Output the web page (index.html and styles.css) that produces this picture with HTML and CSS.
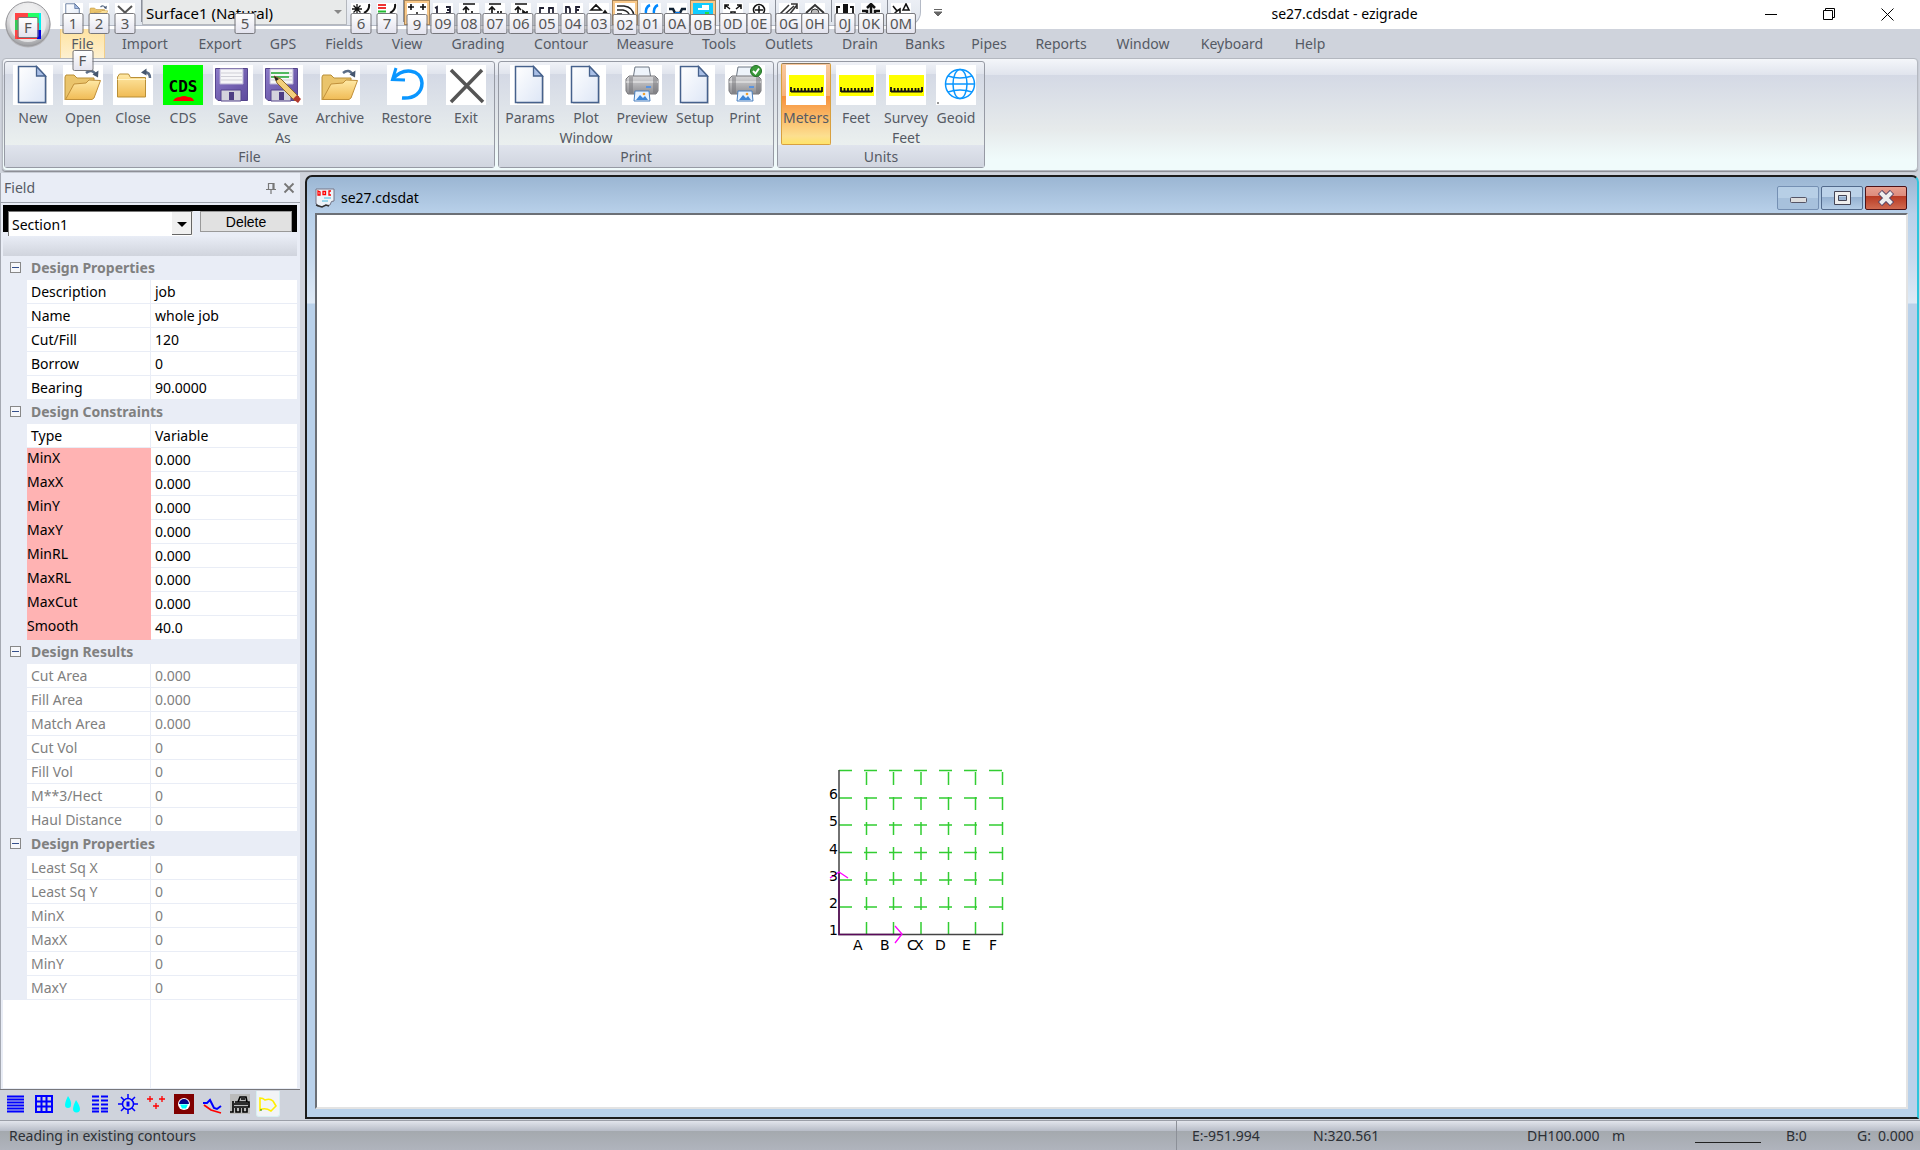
FILE: index.html
```html
<!DOCTYPE html>
<html lang="en">
<head>
<meta charset="utf-8">
<title>se27.cdsdat - ezigrade</title>
<link rel="stylesheet" href="styles.css">
</head>
<body>
<svg class="defs" aria-hidden="true">
  <defs>
    <linearGradient id="gPage" x1="0" y1="0" x2="1" y2="1"><stop offset="0" stop-color="#fff"/><stop offset="1" stop-color="#dde6f6"/></linearGradient>
    <linearGradient id="gFold" x1="0" y1="0" x2="0" y2="1"><stop offset="0" stop-color="#ffe9a6"/><stop offset="1" stop-color="#f0bb55"/></linearGradient>
    <linearGradient id="gPrn" x1="0" y1="0" x2="0" y2="1"><stop offset="0" stop-color="#d8d8da"/><stop offset="1" stop-color="#8c8c90"/></linearGradient>
    <linearGradient id="gDisk" x1="0" y1="0" x2="1" y2="1"><stop offset="0" stop-color="#8c7cc8"/><stop offset="1" stop-color="#5e4a9e"/></linearGradient>
    <radialGradient id="gOrb" cx=".5" cy=".3" r=".75"><stop offset="0" stop-color="#fff"/><stop offset=".6" stop-color="#dcdcde"/><stop offset="1" stop-color="#8f9094"/></radialGradient>
    <symbol id="page" viewBox="0 0 40 40">
      <path d="M7 3h19l8 9v27H7z" fill="#999" opacity=".35"/>
      <path d="M5.500 1.500h18l9 9.500v26.500h-27z" fill="url(#gPage)" stroke="#46618c" stroke-width="1.500"/>
      <path d="M23.500 1.500v9.500h9z" fill="#a9bfe6" stroke="#46618c" stroke-width="1.300"/>
    </symbol>
    <symbol id="folder" viewBox="0 0 40 40">
      <path d="M2 35V12l1-2h8l3 3h17v6" fill="#eac46c" stroke="#b98f36"/>
      <path d="M2.500 34.500L11 19l12-1 3-3 11.500.5L31 33l-2 1.500z" fill="url(#gFold)" stroke="#c1903a"/>
      <path d="M23 8q6-5 10 2" fill="none" stroke="#5a6c86" stroke-width="2.500"/><path d="M29.500 9.500l5.500 3 .5-7z" fill="#45566f"/>
    </symbol>
    <symbol id="folderclosed" viewBox="0 0 40 40">
      <path d="M4.500 32V12l2-3h9l2 3.500h15V32z" fill="url(#gFold)" stroke="#b98f36"/>
      <path d="M4.500 14.500h28" stroke="#fff3c6"/>
      <path d="M31 7q6 0 6 6" fill="none" stroke="#5a6c86" stroke-width="2.500"/><path d="M28 7.500l5.500-4v7z" fill="#45566f"/>
    </symbol>
    <symbol id="disk" viewBox="0 0 40 40">
      <path d="M2.500 3.500h32v32H5l-2.500-2.500z" fill="url(#gDisk)" stroke="#54448c"/>
      <path d="M7 4h23v15H7z" fill="#f6f6f8" stroke="#b9b3d4"/><path d="M8 8h21M8 11.500h21M8 15h21" stroke="#cfcfd6"/>
      <path d="M8 25h20v11H8z" fill="#d4d4dc" stroke="#54448c"/><path d="M16 27h5v8h-5z" fill="#4e3f84"/>
    </symbol>
    <symbol id="printer" viewBox="0 0 40 40">
      <path d="M13 2h14l2 12H11z" fill="#eef4fb" stroke="#6d7784"/>
      <path d="M4 14l3-3h26l3 3v12l-2 3H6l-2-3z" fill="url(#gPrn)" stroke="#77777b"/>
      <path d="M4 17h32" stroke="#efefef"/><path d="M7 12h4v16H7zM31 12h4v16h-4z" fill="#6f6f74" opacity=".45"/>
      <path d="M24 22h5" stroke="#3f8df0" stroke-width="1.500"/><path d="M13 26h14l1 10H12z" fill="#e6f2ff" stroke="#4a7fbd"/>
      <path d="M14 35l4-5 3 3 2-2 3 4z" fill="#3d86d8"/><circle cx="22" cy="29" r="1.300" fill="#f0a030"/>
    </symbol>
    <symbol id="ruler" viewBox="0 0 40 40">
      <path d="M3 10h35v21H3z" fill="#ff0"/>
      <path d="M5 26.500h31M5 22v5M36 22v5M8.500 23v3M12 23v3M15.500 23v3M19 23v3M22.500 23v3M26 23v3M29.500 23v3M32.500 23v3" stroke="#111" stroke-width="1.800"/>
    </symbol>
  </defs>
</svg>

<header class="titlebar">
  <button class="orb" aria-label="Application menu">
    <svg width="48" height="48" viewBox="0 0 48 48"><circle cx="24" cy="25" r="22.500" fill="#b4b4b8"/><circle cx="24" cy="24" r="22" fill="url(#gOrb)" stroke="#98989c"/><circle cx="24" cy="24" r="18" fill="#ececee" opacity=".8"/>
      <path d="M11 13h26v26H11z" fill="#f44"/><path d="M24 13h11v10H24z" fill="#2f6"/><path d="M11 20h4v10h-4z" fill="#3c5"/><path d="M35 13h2v17h-2z" fill="#0ee"/><path d="M33 30h4v9h-4z" fill="#00d"/><path d="M13 37h20v2H13z" fill="#f33"/></svg>
    <kbd class="tip">F</kbd>
  </button>
  <div class="qat">
    <button class="q" aria-label="New"><svg width="20" height="20"><use href="#page"/></svg><kbd class="tip">1</kbd></button>
    <button class="q" aria-label="Open"><svg width="20" height="20"><use href="#folder"/></svg><kbd class="tip">2</kbd></button>
    <button class="q" aria-label="Close"><svg width="20" height="20"><path d="M3 3l14 13M17 3L3 16" stroke="#555" stroke-width="2"/></svg><kbd class="tip">3</kbd></button>
    <i class="sep"></i>
    <div class="surface"><select aria-label="Surface"><option>Surface1 (Natural)</option></select><kbd class="tip">5</kbd></div>
    <button class="q" aria-label="Points"><svg width="20" height="20"><path d="M6 1v10M1 6h10M2.500 2.500l7 7M9.500 2.500l-7 7" stroke="#111" stroke-width="1.300"/><path d="M18 1q1 6-5 9" fill="none" stroke="#111" stroke-width="2"/></svg><kbd class="tip">6</kbd></button>
    <button class="q" aria-label="Layers"><svg width="20" height="20"><path d="M1 2h8M1 5h8" stroke="#e33" stroke-width="2"/><path d="M1 8.500h8M1 11h8" stroke="#2b3" stroke-width="2"/><path d="M18 1q1 6-5 9" fill="none" stroke="#111" stroke-width="2"/></svg><kbd class="tip">7</kbd></button>
    <i class="sep"></i>
    <button class="q on" aria-label="Grid points"><svg width="20" height="20"><path d="M1 4h6M4 1v6M13 4h6M16 1v6M9 10h2" stroke="#111" stroke-width="1.600"/></svg><kbd class="tip">9</kbd></button>
    <button class="q" aria-label="Numbers"><svg width="20" height="20"><path d="M2 5l2-1v7M13 4h4v3h-3M17 7v3h-4" fill="none" stroke="#223" stroke-width="1.800"/></svg><kbd class="tip">09</kbd></button>
    <button class="q" aria-label="Level L"><svg width="20" height="20"><path d="M4 1h12M7 12V4M4 7l3-3 3 3M13 8v4" fill="none" stroke="#111" stroke-width="1.700"/></svg><kbd class="tip">08</kbd></button>
    <button class="q" aria-label="Level H"><svg width="20" height="20"><path d="M4 1h12M7 12V4M4 7l3-3 3 3M13 8v4M16 8v4" fill="none" stroke="#111" stroke-width="1.700"/></svg><kbd class="tip">07</kbd></button>
    <button class="q" aria-label="Level N"><svg width="20" height="20"><path d="M4 1h12M7 12V4M4 7l3-3 3 3M12 12V8l4 3V8" fill="none" stroke="#111" stroke-width="1.700"/></svg><kbd class="tip">06</kbd></button>
    <button class="q" aria-label="Codes"><svg width="20" height="20"><path d="M7 5H3v6h4M12 5h4v6h-4z" fill="none" stroke="#223" stroke-width="1.800"/></svg><kbd class="tip">05</kbd></button>
    <button class="q" aria-label="Descriptions"><svg width="20" height="20"><path d="M3 4h3l1 2v5H3zM17 4h-4v7h4M13 7h3" fill="none" stroke="#223" stroke-width="1.800"/></svg><kbd class="tip">04</kbd></button>
    <button class="q" aria-label="Triangles"><svg width="20" height="20"><path d="M2 7l5-5 5 5zM13 12l3-4 3 4z" fill="none" stroke="#111" stroke-width="1.700"/></svg><kbd class="tip">03</kbd></button>
    <button class="q on" aria-label="Contours"><svg width="20" height="20"><path d="M2 3h7q9 1 10 10M2 7h6q6 1 7 7M2 11h5" fill="none" stroke="#222" stroke-width="1.500"/></svg><kbd class="tip">02</kbd></button>
    <button class="q" aria-label="Flow"><svg width="20" height="20"><path d="M9 2q-5 2-4 10M17 2q-5 2-4 10" fill="none" stroke="#08f" stroke-width="2.500"/></svg><kbd class="tip">01</kbd></button>
    <button class="q" aria-label="Channel"><svg width="20" height="20"><path d="M2 6h4l2 4h5l2-4h4" fill="none" stroke="#123" stroke-width="2.500"/><path d="M8 9h5v4H8z" fill="#07e"/></svg><kbd class="tip">0A</kbd></button>
    <button class="q on" aria-label="Map"><svg width="20" height="20"><path d="M0 0h20v16H0z" fill="#1cf"/><path d="M5 5h4V2h7v5H5z" fill="#fff"/><path d="M12 9h4v4h-4z" fill="#2d4"/></svg><kbd class="tip">0B</kbd></button>
    <i class="sep"></i>
    <button class="q" aria-label="Zoom extents"><svg width="20" height="20"><path d="M2 6V2h4M2 2l5 4M18 6V2h-4M18 2l-5 4M8 12V9h4v3" fill="none" stroke="#111" stroke-width="1.600"/></svg><kbd class="tip">0D</kbd></button>
    <button class="q" aria-label="Zoom in"><svg width="20" height="20"><circle cx="10" cy="7" r="5.500" fill="none" stroke="#111" stroke-width="1.600"/><path d="M6 7h8M10 3v8" stroke="#111" stroke-width="1.500"/></svg><kbd class="tip">0E</kbd></button>
    <i class="sep"></i>
    <button class="q" aria-label="Slope"><svg width="20" height="20"><path d="M1 11L10 2M5 12l10-9M10 12l8-10M12 1h6v5" fill="none" stroke="#333" stroke-width="1.600"/></svg><kbd class="tip">0G</kbd></button>
    <button class="q" aria-label="Level"><svg width="20" height="20"><path d="M1 10l9-8 9 8" fill="none" stroke="#333" stroke-width="2"/><circle cx="10" cy="10" r="4" fill="#bbb" stroke="#333"/></svg><kbd class="tip">0H</kbd></button>
    <i class="sep"></i>
    <button class="q" aria-label="Section"><svg width="20" height="20"><path d="M5 4H2v8M15 4h3v8" fill="none" stroke="#111" stroke-width="1.800"/><path d="M8 1h5v10H8z" fill="#111"/></svg><kbd class="tip">0J</kbd></button>
    <button class="q" aria-label="Raise"><svg width="20" height="20"><path d="M10 12V3M6 5l4-4 4 4M1 8h5v4M19 8h-5v4" fill="none" stroke="#111" stroke-width="2.500"/></svg><kbd class="tip">0K</kbd></button>
    <i class="sep"></i>
    <button class="q" aria-label="Text"><svg width="20" height="20"><path d="M2 3l4 5-4 4M9 12V6l-3 2M12 7l3-6 3 6z" fill="none" stroke="#111" stroke-width="1.600"/></svg><kbd class="tip">0M</kbd></button>
  </div>
  <button class="more" aria-label="Customize toolbar"><svg width="10" height="9"><path d="M1 1.500h8M1 4l4 4 4-4z" fill="#666" stroke="#666"/></svg></button>
  <h1>se27.cdsdat - ezigrade</h1>
  <div class="winbtns">
    <button aria-label="Minimize"><svg width="13" height="13"><path d="M0 6.500h12" stroke="#000"/></svg></button>
    <button aria-label="Restore"><svg width="13" height="13"><path d="M.5 2.500h9v9h-9zM2.500 2.500v-2h9v9h-2" fill="none" stroke="#000"/></svg></button>
    <button aria-label="Close"><svg width="13" height="13"><path d="M.5.5l12 12M12.500.5l-12 12" stroke="#000"/></svg></button>
  </div>
</header>

<nav class="tabs">
  <button class="active">File<kbd class="tip">F</kbd></button><button>Import</button><button>Export</button><button>GPS</button><button>Fields</button><button>View</button><button>Grading</button><button>Contour</button><button>Measure</button><button>Tools</button><button>Outlets</button><button>Drain</button><button>Banks</button><button>Pipes</button><button>Reports</button><button>Window</button><button>Keyboard</button><button>Help</button>
</nav>

<div class="ribbon">
  <section class="group">
    <div class="items">
      <button class="r"><svg width="40" height="40"><use href="#page"/></svg>New</button>
      <button class="r"><svg width="40" height="40"><use href="#folder"/></svg>Open</button>
      <button class="r"><svg width="40" height="40"><use href="#folderclosed"/></svg>Close</button>
      <button class="r"><svg width="40" height="40"><rect width="40" height="40" fill="#0f0"/><text class="cds" x="20" y="27" text-anchor="middle">CDS</text><path d="M10 36q2-4 7-4 4-2 8 0 5 0 6 4z" fill="#f00"/></svg>CDS</button>
      <button class="r"><svg width="40" height="40"><use href="#disk"/></svg>Save</button>
      <button class="r"><svg width="40" height="40"><use href="#disk"/><path d="M8 8h18M8 12h18" stroke="#2a3" stroke-width="1.500"/><path d="M11 11l3 7 18 18 4-4-18-18z" fill="#f3cf7c" stroke="#8c6a2c"/><path d="M11 11l2 5 3-2z" fill="#222"/><path d="M30 34l4-4 4 4-3 4z" fill="#b33a2e"/></svg><span>Save<br>As</span></button>
      <button class="r wide"><svg width="40" height="40"><use href="#folder"/></svg>Archive</button>
      <button class="r wider"><svg width="40" height="40"><path d="M6 14C16 2 34 4 35 18c0 10-8 16-20 15" fill="none" stroke="#0a96ff" stroke-width="3.500"/><path d="M9 3L5.500 14.500 18 15" fill="none" stroke="#0a96ff" stroke-width="3"/></svg>Restore</button>
      <button class="r"><svg width="40" height="40"><path d="M5 5l32 32M36 5L5 37" stroke="#555" stroke-width="3.500"/></svg>Exit</button>
    </div>
    <h2>File</h2>
  </section>
  <section class="group">
    <div class="items">
      <button class="r mid"><svg width="40" height="40"><use href="#page"/></svg>Params</button>
      <button class="r mid"><svg width="40" height="40"><use href="#page"/></svg>Plot Window</button>
      <button class="r mid"><svg width="40" height="40"><use href="#printer"/></svg>Preview</button>
      <button class="r"><svg width="40" height="40"><use href="#page"/></svg>Setup</button>
      <button class="r"><svg width="40" height="40"><use href="#printer"/><circle cx="31" cy="6" r="5.500" fill="#3a9a3a" stroke="#1f6f22"/><path d="M28 6l2.500 2.500L34 3.500" fill="none" stroke="#fff" stroke-width="2"/></svg>Print</button>
    </div>
    <h2>Print</h2>
  </section>
  <section class="group">
    <div class="items">
      <button class="r on"><svg width="40" height="40"><use href="#ruler"/></svg>Meters</button>
      <button class="r"><svg width="40" height="40"><use href="#ruler"/></svg>Feet</button>
      <button class="r"><svg width="40" height="40"><use href="#ruler"/></svg>Survey Feet</button>
      <button class="r"><svg width="40" height="40"><g fill="none" stroke="#0a96ff" stroke-width="1.500"><circle cx="24" cy="19" r="14.500"/><ellipse cx="24" cy="19" rx="7" ry="14.500"/><path d="M12 11q12 4 24 0M12 27q12-4 24 0M9.500 19h29"/></g><path d="M1 38h2" stroke="#333"/></svg>Geoid</button>
    </div>
    <h2>Units</h2>
  </section>
</div>

<main class="work">
  <aside class="panel">
    <div class="panelhead"><h2>Field</h2>
      <button aria-label="Pin"><svg width="12" height="12"><path d="M3.500 1v6M8 1v6M9 1v6M3 1.500h6M1 7.500h10M6 8v4" stroke="#777" stroke-width="1.200" fill="none"/></svg></button>
      <button aria-label="Close panel"><svg width="12" height="12"><path d="M1.500 1.500l9 9M10.500 1.500l-9 9" stroke="#777" stroke-width="1.800"/></svg></button>
    </div>
    <div class="picker"><div class="section"><select aria-label="Section"><option>Section1</option></select><svg width="20" height="23"><path d="M0 0h20v23H0z" fill="#f0f0f0"/><path d="M19.500 0v22.500H0" fill="none" stroke="#666"/><path d="M5 10h10l-5 5z" fill="#000"/></svg></div><button class="delete">Delete</button></div>
    <div class="shade"></div>
    <div class="props">
      <table>
        <colgroup><col class="c0"><col class="c1"><col></colgroup>
        <tbody>
          <tr class="cat"><td><button aria-label="Collapse"></button></td><th colspan="2">Design Properties</th></tr>
          <tr><td></td><th>Description</th><td>job</td></tr>
          <tr><td></td><th>Name</th><td>whole job</td></tr>
          <tr><td></td><th>Cut/Fill</th><td>120</td></tr>
          <tr><td></td><th>Borrow</th><td>0</td></tr>
          <tr><td></td><th>Bearing</th><td>90.0000</td></tr>
        </tbody>
        <tbody>
          <tr class="cat"><td><button aria-label="Collapse"></button></td><th colspan="2">Design Constraints</th></tr>
          <tr><td></td><th>Type</th><td>Variable</td></tr>
          <tr class="hot"><td></td><th>MinX</th><td>0.000</td></tr>
          <tr class="hot"><td></td><th>MaxX</th><td>0.000</td></tr>
          <tr class="hot"><td></td><th>MinY</th><td>0.000</td></tr>
          <tr class="hot"><td></td><th>MaxY</th><td>0.000</td></tr>
          <tr class="hot"><td></td><th>MinRL</th><td>0.000</td></tr>
          <tr class="hot"><td></td><th>MaxRL</th><td>0.000</td></tr>
          <tr class="hot"><td></td><th>MaxCut</th><td>0.000</td></tr>
          <tr class="hot"><td></td><th>Smooth</th><td>40.0</td></tr>
        </tbody>
        <tbody class="dim">
          <tr class="cat"><td><button aria-label="Collapse"></button></td><th colspan="2">Design Results</th></tr>
          <tr><td></td><th>Cut Area</th><td>0.000</td></tr>
          <tr><td></td><th>Fill Area</th><td>0.000</td></tr>
          <tr><td></td><th>Match Area</th><td>0.000</td></tr>
          <tr><td></td><th>Cut Vol</th><td>0</td></tr>
          <tr><td></td><th>Fill Vol</th><td>0</td></tr>
          <tr><td></td><th>M**3/Hect</th><td>0</td></tr>
          <tr><td></td><th>Haul Distance</th><td>0</td></tr>
        </tbody>
        <tbody class="dim">
          <tr class="cat"><td><button aria-label="Collapse"></button></td><th colspan="2">Design Properties</th></tr>
          <tr><td></td><th>Least Sq X</th><td>0</td></tr>
          <tr><td></td><th>Least Sq Y</th><td>0</td></tr>
          <tr><td></td><th>MinX</th><td>0</td></tr>
          <tr><td></td><th>MaxX</th><td>0</td></tr>
          <tr><td></td><th>MinY</th><td>0</td></tr>
          <tr><td></td><th>MaxY</th><td>0</td></tr>
        </tbody>
      </table>
      <div class="rest"></div>
    </div>
    <div class="viewbar">
      <button aria-label="Rows"><svg width="20" height="20"><path d="M1 2.500h17M1 5.500h17M1 8.500h17M1 11.500h17M1 14.500h17M1 17.500h17" stroke="#00f" stroke-width="2"/></svg></button>
      <button aria-label="Grid"><svg width="20" height="20"><path d="M2 2h16v16H2zM7.500 2v16M12.500 2v16M2 7.500h16M2 12.500h16" fill="none" stroke="#00f" stroke-width="2"/></svg></button>
      <button aria-label="Water"><svg width="20" height="20"><path d="M6 2q4 6 3 9a3 3 0 0 1-6 0q0-3 3-9zM14 6q4 6 4 9a3 3 0 0 1-7 0q0-3 3-9z" fill="#0ff"/></svg></button>
      <button aria-label="Columns"><svg width="20" height="20"><path d="M2 2.500h7M11 2.500h7M2 6.500h7M11 6.500h7M2 10.500h7M11 10.500h7M2 14.500h7M11 14.500h7M2 17.500h7M11 17.500h7" stroke="#00f" stroke-width="2"/></svg></button>
      <button aria-label="Sprinkler"><svg width="20" height="20"><circle cx="10" cy="10" r="5.500" fill="none" stroke="#00f" stroke-width="1.500"/><path d="M10 7.500v5" stroke="#00f" stroke-width="3"/><path d="M10 0v4M10 16v4M0 10h4M16 10h4M3 3l3 3M17 3l-3 3M3 17l3-3M17 17l-3-3" stroke="#00f" stroke-width="1.500"/></svg></button>
      <button aria-label="Points"><svg width="20" height="20"><path d="M1 5h6M4 2v6M13 5h6M16 2v6M7 12h6M10 9v6" stroke="#f00" stroke-width="1.300"/></svg></button>
      <button aria-label="Level"><svg width="20" height="20"><path d="M0 0h20v20H0z" fill="#800000"/><circle cx="10" cy="10" r="6" fill="#fff"/><path d="M5 10a5 5 0 0 1 10 0z" fill="#008"/><path d="M6 10.500h8l-2 4H8z" fill="#0ff"/></svg></button>
      <button aria-label="Profile"><svg width="20" height="20"><path d="M1 9h4l3-3 4 8 3 1 4-3" fill="none" stroke="#00f" stroke-width="2"/><path d="M2 11l7 5 10 3" fill="none" stroke="#f00" stroke-width="1.800"/></svg></button>
      <button aria-label="Machine"><svg width="20" height="20"><path d="M0 0h20v20H0z" fill="#bbb"/><path d="M3 7v11H0M5 8h14v5H4M8 8l2-5h6l1 5M11 5h4M6 14v4h4v-4M13 14v4h4v-4M4 10h14" fill="none" stroke="#000" stroke-width="1.600"/></svg></button>
      <button class="on" aria-label="Field"><svg width="20" height="20"><path d="M2 16V4q3 0 5 2 5-2 8 1l3 5-5 5q-6-4-11-1z" fill="none" stroke="#fe0" stroke-width="1.600"/><path d="M3 15v2" stroke="#282"/></svg></button>
    </div>
  </aside>

  <section class="child">
    <div class="childbar">
      <svg width="20" height="20"><path d="M1 1h18v12q-3-1-4 4-3 1-5 0-2 3-8 1V16H1z" fill="#eef3f8" stroke="#778"/><path d="M9 10h7M7 13h6" stroke="#4bd" stroke-width="1.200"/><path d="M3 3v4h2V4zM8 3.500h2.500v3H8zM16 3h-2v4h2" fill="none" stroke="#f00" stroke-width="1.300"/><path d="M1 17l3 1 3 1 4-2 3 1" fill="none" stroke="#333" stroke-width="1.500"/></svg>
      <h2>se27.cdsdat</h2>
      <button aria-label="Minimize drawing"><svg width="20" height="16"><rect x="2.500" y="7.500" width="16" height="5" rx="1" fill="#ddd" stroke="#556"/></svg></button>
      <button class="max" aria-label="Maximize drawing"><svg width="20" height="16"><path d="M2.500 1.500h16v13h-16zM6.500 5.500h8v5h-8z" fill="#eee" fill-rule="evenodd" stroke="#445"/></svg></button>
      <button class="x" aria-label="Close drawing"><svg width="20" height="16"><path d="M4 2l12 12M16 2L4 14" stroke="#546" stroke-width="6"/><path d="M4.500 2.500l11 11M15.500 2.500l-11 11" stroke="#eee" stroke-width="4"/></svg></button>
    </div>
    <div class="canvas">
      <svg class="plot" width="220" height="200">
        <g stroke="#32cd32" stroke-width="1.500" fill="none" stroke-dasharray="13 12">
          <path d="M22 10.500h164M22 38h164M22 65h164M22 92.500h164M22 120h164M22 147h164"/>
          <path d="M49.500 175V11M76.500 175V11M104 175V11M131.500 175V11M158.500 175V11M185.500 175V11"/>
        </g>
        <path d="M22 10v164.500h164" fill="none" stroke="#444" stroke-width="1.500"/>
        <path d="M22 112v62.500h62" fill="none" stroke="#5a0a5a" stroke-width="1.500"/>
        <path d="M13 118l9-6 9 6M78 166l7 8-7 9" fill="none" stroke="#f0f" stroke-width="1.300"/>
        <g class="lbl">
          <text x="12" y="39">6</text><text x="12" y="66">5</text><text x="12" y="94">4</text><text x="12" y="121">3</text><text x="12" y="148">2</text><text x="12" y="175">1</text>
          <text x="36" y="190">A</text><text x="63" y="190">B</text><text x="90" y="190">C</text><text x="97" y="190">X</text><text x="118" y="190">D</text><text x="145" y="190">E</text><text x="172" y="190">F</text>
        </g>
      </svg>
    </div>
  </section>
</main>

<footer class="status">
  <p class="msg">Reading in existing contours</p>
  <p>E:-951.994</p><p>N:320.561</p><p>DH100.000</p><p>m</p><p><span class="rule"></span></p><p>B:0</p><p>G:</p><p>0.000</p>
</footer>
</body>
</html>
```
FILE: styles.css
```css
* { box-sizing: border-box; }
body {
  margin: 0; min-height: 100vh; display: flex; flex-direction: column;
  background: #cfd3dc; color: #000; font: 14px/20px "Noto Sans", "Open Sans", sans-serif;
}
h1, h2, p { margin: 0; font-size: inherit; font-weight: 400; }
button, select { font: inherit; color: inherit; margin: 0; padding: 0; border: 0; background: none; }
svg { display: block; }
.defs { position: absolute; width: 0; height: 0; }

.tip {
  position: absolute; z-index: 3; top: 13px; left: 50%; transform: translateX(-50%);
  min-width: 21px; height: 21px; padding: 0 3px; border: 1px solid #77777c; border-radius: 2px;
  background: linear-gradient(#fff, #e3e3ee); color: #555; font: 15px/19px "Noto Sans", sans-serif; text-align: center;
}

/* Title bar */
.titlebar { position: relative; display: flex; height: 29px; padding-left: 60px; background: #fff; }
.orb { position: absolute; z-index: 2; left: 4px; top: 0; width: 48px; height: 48px; }
.orb .tip { top: 17px; }
.qat {
  display: flex; height: 26px; padding-right: 6px; border: solid #b4bac6; border-width: 0 1px 1px 0;
  border-radius: 0 0 14px 0; background: linear-gradient(#eceff5, #dfe4ec);
}
.q { position: relative; width: 26px; height: 25px; padding: 3px; }
.q svg { background: #fff; }
.q.on { background: #f9c98a; border: 1px solid #a8865a; padding: 2px; }
.sep { width: 4px; height: 22px; border-right: 1px solid #8b909a; }
.surface { position: relative; width: 206px; }
.surface select {
  width: 205px; height: 25px; padding: 2px 0 0 3px; appearance: none; border: 1px solid #b4b8be; border-top: 0;
  background: #e8eaea; font-size: 15px;
}
.surface::after {
  content: ""; position: absolute; right: 6px; top: 10px; border: 4px solid transparent; border-top-color: #888;
}
.surface .tip { left: 103px; }
.more { width: 34px; display: grid; place-items: center; padding-bottom: 4px; }
.titlebar h1 { flex: 1; padding-right: 8px; text-align: center; line-height: 28px; }
.winbtns { display: flex; margin-right: 4px; }
.winbtns button { width: 58px; height: 28px; display: grid; place-items: center; }

/* Tabs */
.tabs {
  display: grid; height: 29px; padding-left: 60px; color: #555a64;
  grid-template-columns: 45px 80px 70px 56px 66px 60px 82px 84px 84px 64px 76px 66px 64px 64px 80px 84px 94px 62px;
}
.tabs button { position: relative; padding-top: 1px; line-height: 28px; white-space: nowrap; }
.tabs .active { background: linear-gradient(#ffe3a0, #fdf0d0); border: 1px solid #f3cf88; border-width: 0 1px; }
.tabs .tip { top: 21px; }

/* Ribbon */
.ribbon {
  display: flex; gap: 3px; height: 113px; margin: 0 2px; padding: 2px 1px; border: 1px solid #b4b8c0; border-radius: 4px;
  background: linear-gradient(#f4f6fa, #e0e4ed 16px, #d4d9e5 16px, #e6eaeb 70px, #f0fbfb 100px);
  box-shadow: 0 1px 1px #85888e;
}
.group {
  display: flex; flex-direction: column; border: 1px solid #969aa4; border-radius: 3px; color: #555a64;
  background: linear-gradient(#f0f2f7, #e0e4ed 12px, #d4d9e5 12px, #ebf0ef 84px);
}
.group h2 { height: 22px; text-align: center; line-height: 23px; background: linear-gradient(#e0e4ed, #d0d5df); }
.items { display: flex; height: 84px; padding: 1px 3px 0; }
.r {
  width: 50px; height: 82px; display: flex; flex-direction: column; align-items: center; justify-content: flex-start;
  padding-top: 2px; line-height: 20px;
}
.r svg { flex: none; margin-bottom: 3px; background: #fff; }
.r.mid { width: 56px; }
.r.wide { width: 64px; }
.r.wider { width: 69px; }
.r.on {
  border: 1px solid #d8a040; border-top-color: #8a7458; border-radius: 2px; padding-top: 1px;
  background: linear-gradient(#f8c9a0, #f7b27a 32px, #f78f3a 32px, #fcdf90 72px, #ffe36a);
}
.cds { font: bold 16px "DejaVu Sans Mono", monospace; }

/* Work area */
.work { flex: 1; display: flex; margin-top: 2px; gap: 5px; }
.panel { width: 300px; display: flex; flex-direction: column; background: #e9edf6; border-left: 1px solid #a5a9b2; }
.panelhead { display: flex; align-items: center; gap: 6px; height: 30px; padding: 0 5px 0 3px; color: #555a64; border-bottom: 1px solid #9ea3ac; }
.panelhead h2 { flex: 1; }
.panelhead button { width: 12px; height: 12px; }
.picker {
  display: flex; gap: 7px; height: 31px; margin: 2px 3px 0 2px; padding: 6px 5px 0;
  background: linear-gradient(#000 27px, transparent 27px);
}
.section { display: flex; width: 185px; height: 26px; border: 1px solid #777; border-color: #777 #eee #eee #777; background: #fff; }
.section select { flex: 1; padding: 2px 0 0 3px; appearance: none; }
.section svg { flex: none; }
.delete { flex: 1; height: 21px; border: 1px solid #999; background: #e1e1e1; box-shadow: -7px 0 #e9edf6; font: 14px/18px "Liberation Sans", Arial, sans-serif; }
.shade { height: 20px; margin: 0 3px 0 2px; background: linear-gradient(#e9edf6, #d0d4dd); }
.props { flex: 1; display: flex; flex-direction: column; margin: 0 3px 0 2px; }
table { width: 100%; border-collapse: separate; border-spacing: 0; table-layout: fixed; }
.c0 { width: 24px; }
.c1 { width: 124px; }
tr { height: 24px; }
td, th { height: 24px; padding: 0 0 0 4px; font-weight: 400; text-align: left; line-height: 19px; border-bottom: 1px solid #e9edf6; background: #fff; white-space: nowrap; }
th { border-right: 1px solid #e9edf6; }
td:first-child { padding: 0 0 0 7px; background: #e9edf6; }
.cat th { background: #e9edf6; font-weight: 700; color: #808080; }
.cat button { display: block; width: 11px; height: 11px; border: 1px solid #888; background: linear-gradient(#35508c, #35508c) center/7px 1px no-repeat #f6f7fa; }
.hot th { padding: 0 0 4px; background: #ffb3b3; border-color: #ffb3b3; }
.dim { color: #808080; }
.rest { flex: 1; margin-bottom: 1px; background: linear-gradient(#e9edf6, #e9edf6) 147px 0/1px 100% no-repeat #fff; }
.viewbar { display: flex; gap: 4px; height: 31px; padding: 1px 4px 0; margin-left: -1px; border-top: 1px solid #77777b; background: #cfd3dc; }
.viewbar button { width: 24px; height: 26px; display: grid; place-items: center; }
.viewbar .on { background: #f2f4f6; border: 1px solid #d8f0f2; border-top: 0; border-radius: 0 0 3px 3px; }

/* Drawing window */
.child {
  flex: 1; display: flex; flex-direction: column; margin: 2px 1px 1px 0; padding: 1px 9px 8px 8px;
  border: 2px solid #1c1c1c; border-right-color: #2cc5dc; border-radius: 7px 7px 0 0;
  background: linear-gradient(#9bb6d3, #b9d1ea 37px, #c8daee 80px, #dfeaf6 126px, #b9d1ea 127px);
}
.childbar { display: flex; align-items: center; gap: 2px; height: 35px; padding: 4px 1px 0 0; }
.childbar h2 { flex: 1; padding-left: 4px; }
.childbar button { width: 42px; height: 24px; display: grid; place-items: center; border: 1px solid #7590b3; border-radius: 2px; background: linear-gradient(#b7cfe6 50%, #a7c1dc 50%); }
.childbar .max { border-color: #526a8c; background: linear-gradient(#bcd2e9 45%, #94b0d0 45%, #b5cde6); }
.childbar .x { border-color: #4c1218; background: linear-gradient(#e8a090, #dc8a7c 42%, #b83a24 42%, #d06a50); }
.canvas { position: relative; flex: 1; border: 2px solid; border-color: #6c7076 #e3e3e3 #e3e3e3 #6c7076; background: #fff; }
.plot { position: absolute; left: 500px; top: 545px; }
.lbl { font: 14px "DejaVu Sans", sans-serif; }

/* Status bar */
.status {
  display: grid; grid-template-columns: 1fr 121px 214px 85px 83px 91px 71px 21px 42px; align-items: center; height: 30px;
  border-top: 1px solid #9b9fa8; color: #2c3036;
  background: linear-gradient(#e2e5ec, #b7bcc7 10px, #a4a9ae 10px, #b0b4bd);
}
.status .msg { display: flex; align-items: center; height: 29px; padding-left: 9px; border-right: 1px solid #8c9098; margin-right: 15px; }
.rule { display: block; width: 66px; height: 1px; margin-top: 14px; background: #222; }
```
